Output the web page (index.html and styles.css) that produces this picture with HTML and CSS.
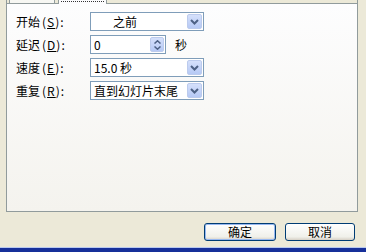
FILE: index.html
```html
<!DOCTYPE html>
<html lang="zh-CN">
<head>
  <meta charset="UTF-8">
  <title>自定义动画 - 计时</title>
  <link rel="stylesheet" href="styles.css">
</head>
<body>
  <div class="dialog">
    <!-- Tab strip (cut off at the top) -->
    <div class="tabs">
      <div class="tab-edge"></div>
      <div class="tab">效果</div>
      <div class="tab-gap"></div>
      <div class="tab selected"><span class="focus"></span></div>
      <div class="tab-rest"></div>
    </div>

    <!-- Timing panel -->
    <div class="panel">
      <div class="form">
        <label class="label">开始<span class="key">(<u>S</u>):</span></label>
        <div class="combo wide">
          <span class="value indent">之前</span>
          <span class="drop"><svg width="9" height="6" viewBox="0 0 9 6"><path d="M1 1 L4.5 4.5 L8 1" fill="none" stroke="#4d6185" stroke-width="2"/></svg></span>
        </div>

        <label class="label">延迟<span class="key">(<u>D</u>):</span></label>
        <div class="field-row">
          <div class="combo spin">
            <span class="value">0</span>
            <span class="spinner">
              <svg width="7" height="4" viewBox="0 0 7 4"><path d="M0.5 3.5 L3.5 0.8 L6.5 3.5" fill="none" stroke="#4d6185" stroke-width="1.5"/></svg>
              <svg width="7" height="4" viewBox="0 0 7 4"><path d="M0.5 0.5 L3.5 3.2 L6.5 0.5" fill="none" stroke="#4d6185" stroke-width="1.5"/></svg>
            </span>
          </div>
          <span class="unit">秒</span>
        </div>

        <label class="label">速度<span class="key">(<u>E</u>):</span></label>
        <div class="combo wide">
          <span class="value">15.0 秒</span>
          <span class="drop"><svg width="9" height="6" viewBox="0 0 9 6"><path d="M1 1 L4.5 4.5 L8 1" fill="none" stroke="#4d6185" stroke-width="2"/></svg></span>
        </div>

        <label class="label">重复<span class="key">(<u>R</u>):</span></label>
        <div class="combo wide">
          <span class="value">直到幻灯片末尾</span>
          <span class="drop"><svg width="9" height="6" viewBox="0 0 9 6"><path d="M1 1 L4.5 4.5 L8 1" fill="none" stroke="#4d6185" stroke-width="2"/></svg></span>
        </div>
      </div>
    </div>

    <!-- Dialog buttons -->
    <div class="buttons">
      <button class="btn default">确定</button>
      <button class="btn">取消</button>
    </div>

    <div class="taskbar"></div>
  </div>
</body>
</html>
```

FILE: styles.css
```css
body {
  margin: 0;
  padding: 0;
  background: #ece9d8;
  font-family: "Noto Sans CJK SC", "Liberation Sans", sans-serif;
  font-size: 12px;
  color: #000;
  overflow: hidden;
}

.dialog {
  width: 366px;
  height: 252px;
  display: flex;
  flex-direction: column;
}

/* Tabs - only their lower edge shows */
.tabs {
  display: flex;
  height: 4px;
  margin-left: 6px;
  width: 352px;
  overflow: hidden;
}

.tab-edge {
  width: 2px;
  border-left: 1px solid #919b9c;
  border-bottom: 1px solid #919b9c;
}

.tab {
  width: 44px;
  height: 3px;
  border-left: 1px solid #919b9c;
  border-right: 1px solid #919b9c;
  border-bottom: 1px solid #919b9c;
  background: #f7f7f3;
  color: transparent;
  font-size: 1px;
  overflow: hidden;
}

.tab-gap {
  width: 3px;
  border-bottom: 1px solid #919b9c;
}

.tab.selected {
  width: 47px;
  height: 4px;
  border-bottom: none;
  background: #fcfcfe;
}

.tab.selected .focus {
  display: block;
  margin: 1px 2px 0;
  height: 0;
  border-bottom: 1px dotted #333;
}

.tab-rest {
  flex: 1;
  border-bottom: 1px solid #919b9c;
  border-right: 1px solid #919b9c;
}

/* Panel */
.panel {
  margin-left: 6px;
  width: 352px;
  height: 208px;
  border: 1px solid #919b9c;
  border-top: none;
  background: linear-gradient(#fdfdfe, #f4f3ee);
  padding: 8px 0 0 9px;
  box-sizing: border-box;
}

.form {
  display: grid;
  grid-template-columns: 74px auto;
  grid-auto-rows: 19px;
  row-gap: 4px;
  align-items: center;
}

.label {
  line-height: 19px;
  white-space: nowrap;
}

.label .key {
  margin-left: 2px;
  letter-spacing: 1px;
}

.field-row {
  display: flex;
  align-items: center;
}

.combo {
  height: 19px;
  box-sizing: border-box;
  border: 1px solid #7f9db9;
  background: #fff;
  display: flex;
  align-items: center;
  padding: 1px;
}

.combo.wide {
  width: 114px;
}

.combo.spin {
  width: 76px;
}

.value {
  flex: 1;
  padding-left: 2px;
  line-height: 15px;
  white-space: nowrap;
}

.value.indent {
  padding-left: 21px;
}

.drop {
  width: 15px;
  height: 15px;
  box-sizing: border-box;
  border: 1px solid #bccbed;
  border-radius: 2px;
  background: linear-gradient(#d5e0fb, #b6c9f5);
  display: flex;
  align-items: center;
  justify-content: center;
}

.spinner {
  width: 14px;
  height: 15px;
  box-sizing: border-box;
  border: 1px solid #bccbed;
  border-radius: 2px;
  background: linear-gradient(#d5e0fb, #b6c9f5);
  display: flex;
  flex-direction: column;
  align-items: center;
  justify-content: center;
  gap: 2px;
}

.unit {
  margin-left: 9px;
}

/* Buttons */
.buttons {
  display: flex;
  justify-content: flex-end;
  gap: 9px;
  padding-right: 11px;
  margin-top: 11px;
}

.btn {
  height: 18px;
  padding: 0;
  font-family: "Noto Sans CJK SC", "Liberation Sans", sans-serif;
  font-size: 12px;
  line-height: 14px;
  color: #000;
  border: 1px solid #003c74;
  border-radius: 3px;
  background: linear-gradient(#ffffff, #f0f0ea 80%, #d6d0c5);
  width: 70px;
}

.btn.default {
  width: 72px;
  box-shadow: inset 0 0 0 1px #97b8f0;
}

.taskbar {
  margin-top: auto;
  height: 4px;
  border-top: 1px solid #b9c9ef;
  background: #17309a;
}
```
